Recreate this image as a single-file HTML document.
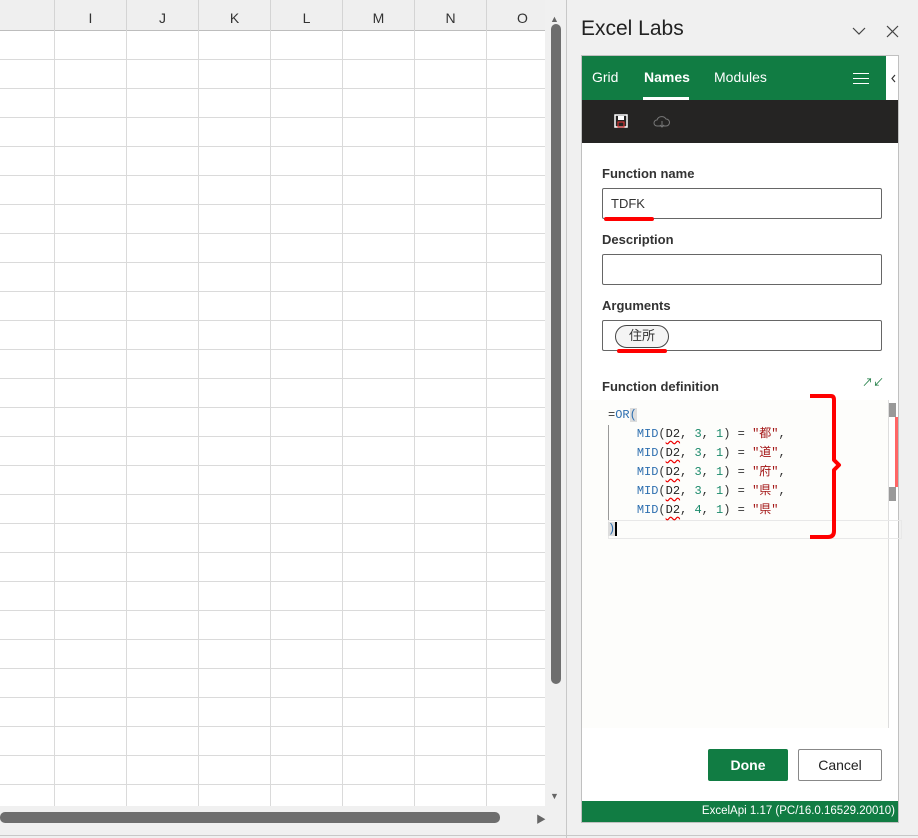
<!DOCTYPE html>
<html><head><meta charset="utf-8"><style>
*{margin:0;padding:0;box-sizing:border-box}
body{width:918px;height:838px;background:#f0f0f0;position:relative;overflow:hidden;font-family:"Segoe UI","Liberation Sans","Noto Sans CJK JP",sans-serif}
.abs{position:absolute}
.grid{left:0;top:31px;width:545px;height:775px;background:#fff;
background-image:linear-gradient(to right,#dadada 1px,transparent 1px),linear-gradient(to bottom,#dadada 1px,transparent 1px);
background-size:72px 29px;background-position:54px 0,0 28px}
.hdr{left:0;top:0;width:545px;height:31px;background:#efefef;border-bottom:1px solid #bdbdbd}
.col{top:0;height:31px;width:72px;text-align:center;font-size:14px;line-height:36px;color:#333;border-left:1px solid #d4d4d4}
.lbl{left:602px;font-size:13px;color:#333;font-weight:600}
.inp{left:602px;width:280px;height:31px;border:1px solid #666;border-radius:2px;background:#fff}
.red{background:#f00;height:4px;border-radius:2px}
.code{font-family:"Liberation Mono","Noto Sans CJK JP",monospace;font-size:12px;line-height:19px;white-space:pre;left:608px;color:#333}
.f{color:#2e6fb0}.n{color:#1b8a6b}.s{color:#a31515}.d{color:#222;text-decoration:underline wavy #e00;text-underline-offset:3px}
.hb{left:853px;width:16px;height:1px;background:#fff}
</style></head><body>
<div class="abs hdr"></div>
<div class="abs col" style="left:54px">I</div>
<div class="abs col" style="left:126px">J</div>
<div class="abs col" style="left:198px">K</div>
<div class="abs col" style="left:270px">L</div>
<div class="abs col" style="left:342px">M</div>
<div class="abs col" style="left:414px">N</div>
<div class="abs col" style="left:486px">O</div>
<div class="abs grid"></div>
<div class="abs" style="left:546px;top:0;width:20px;height:806px;background:#f0f0f0"></div>
<div class="abs" style="left:550px;top:14px;font-size:9px;color:#666">▲</div>
<div class="abs" style="left:551px;top:24px;width:10px;height:660px;background:#6e6e6e;border-radius:5px"></div>
<div class="abs" style="left:550px;top:791px;font-size:9px;color:#666">▼</div>
<div class="abs" style="left:0;top:812px;width:500px;height:11px;background:#6e6e6e;border-radius:5px"></div>
<div class="abs" style="left:536px;top:811px;font-size:10px;color:#666">▶</div>
<div class="abs" style="left:566px;top:0;width:1px;height:838px;background:#c8c8c8"></div>
<div class="abs" style="left:0;top:835px;width:918px;height:1px;background:#c8c8c8"></div>
<div class="abs" style="left:581px;top:17px;font-size:21px;color:#222">Excel Labs</div>
<svg class="abs" style="left:852px;top:27px" width="14" height="9"><path d="M1 1 L7 7 L13 1" fill="none" stroke="#444" stroke-width="1.2"/></svg>
<svg class="abs" style="left:886px;top:25px" width="13" height="13"><path d="M1 1 L12 12 M12 1 L1 12" fill="none" stroke="#444" stroke-width="1.2"/></svg>
<div class="abs" style="left:581px;top:55px;width:318px;height:768px;border:1px solid #c0c0c0;background:#fff"></div>
<div class="abs" style="left:582px;top:56px;width:304px;height:44px;background:#117c43"></div>
<div class="abs" style="left:886px;top:56px;width:12px;height:44px;background:#fff"></div>
<svg class="abs" style="left:891px;top:74px" width="6" height="9"><path d="M4 1 L1 4.5 L4 8" fill="none" stroke="#333" stroke-width="1.2"/></svg>
<div class="abs" style="left:592px;top:69px;font-size:14px;color:#fff">Grid</div>
<div class="abs" style="left:644px;top:69px;font-size:14px;color:#fff;font-weight:700">Names</div>
<div class="abs" style="left:643px;top:97px;width:46px;height:3px;background:#fff"></div>
<div class="abs" style="left:714px;top:69px;font-size:14px;color:#fff">Modules</div>
<div class="abs hb" style="top:73px"></div>
<div class="abs hb" style="top:78px"></div>
<div class="abs hb" style="top:83px"></div>
<div class="abs" style="left:582px;top:100px;width:316px;height:43px;background:#252423"></div>
<svg class="abs" style="left:614px;top:114px" width="15" height="15"><rect x="1" y="1" width="12" height="12" fill="none" stroke="#fff" stroke-width="1.5"/><rect x="4" y="2" width="6" height="4" fill="#fff"/><rect x="4" y="8" width="6" height="5" fill="none" stroke="#e33" stroke-width="1"/></svg>
<svg class="abs" style="left:653px;top:115px" width="18" height="14"><path d="M4 11 H13 A3.5 3.5 0 0 0 13 4 A5 5 0 0 0 4 5 A3 3 0 0 0 4 11Z" fill="none" stroke="#777"/><path d="M9 6 V12 M7 10 L9 12 L11 10" stroke="#777" fill="none"/></svg>
<div class="abs lbl" style="top:166px">Function name</div>
<div class="abs inp" style="top:188px"></div>
<div class="abs" style="left:611px;top:196px;font-size:13px;color:#333">TDFK</div>
<div class="abs red" style="left:604px;top:217px;width:50px"></div>
<div class="abs lbl" style="top:232px">Description</div>
<div class="abs inp" style="top:254px"></div>
<div class="abs lbl" style="top:298px">Arguments</div>
<div class="abs inp" style="top:320px"></div>
<div class="abs" style="left:615px;top:325px;width:54px;height:23px;border:1px solid #444;border-radius:12px;background:#f4f4f4;font-size:13px;color:#333;text-align:center;line-height:20px">住所</div>
<div class="abs red" style="left:617px;top:349px;width:50px"></div>
<div class="abs lbl" style="top:379px">Function definition</div>
<div class="abs" style="left:862px;top:374px;font-size:11px;color:#1a7a40">↗↙</div>
<div class="abs" style="left:582px;top:400px;width:306px;height:328px;background:#fdfdfb"></div>
<div class="abs" style="left:888px;top:400px;width:10px;height:328px;background:#fff;border-left:1px solid #ddd"></div>
<div class="abs" style="left:889px;top:403px;width:7px;height:14px;background:#999"></div>
<div class="abs" style="left:895px;top:417px;width:3px;height:70px;background:#f66"></div>
<div class="abs" style="left:889px;top:487px;width:7px;height:14px;background:#999"></div>
<div class="abs" style="left:608px;top:425px;width:1px;height:95px;background:#999"></div>
<div class="abs" style="left:608px;top:520px;width:294px;height:19px;border:1px solid #e8e8e8"></div>
<div class="abs code" style="top:406px">=<span class="f">OR</span><span class="f" style="background:#ddd">(</span>
    <span class="f">MID</span>(<span class="d">D2</span>, <span class="n">3</span>, <span class="n">1</span>) = <span class="s">"都"</span>,
    <span class="f">MID</span>(<span class="d">D2</span>, <span class="n">3</span>, <span class="n">1</span>) = <span class="s">"道"</span>,
    <span class="f">MID</span>(<span class="d">D2</span>, <span class="n">3</span>, <span class="n">1</span>) = <span class="s">"府"</span>,
    <span class="f">MID</span>(<span class="d">D2</span>, <span class="n">3</span>, <span class="n">1</span>) = <span class="s">"県"</span>,
    <span class="f">MID</span>(<span class="d">D2</span>, <span class="n">4</span>, <span class="n">1</span>) = <span class="s">"県"</span>
<span class="f" style="background:#ddd">)</span><span style="border-left:2px solid #000"></span></div>
<svg class="abs" style="left:805px;top:393px" width="40" height="150"><path d="M5 3 H26 Q29 3 29 7 V67 L34 72 L29 77 V138 Q29 144 23 144 H5" fill="none" stroke="#f00" stroke-width="4" stroke-linejoin="round"/></svg>
<div class="abs" style="left:708px;top:749px;width:80px;height:32px;background:#117c43;border-radius:2px;color:#fff;font-weight:700;font-size:14px;text-align:center;line-height:32px">Done</div>
<div class="abs" style="left:798px;top:749px;width:84px;height:32px;border:1px solid #888;border-radius:2px;background:#fff;color:#222;font-size:14px;text-align:center;line-height:30px">Cancel</div>
<div class="abs" style="left:582px;top:801px;width:316px;height:21px;background:#117c43;color:#fff;font-size:11.5px;text-align:right;padding-right:3px;line-height:21px">ExcelApi 1.17 (PC/16.0.16529.20010)</div>
</body></html>
